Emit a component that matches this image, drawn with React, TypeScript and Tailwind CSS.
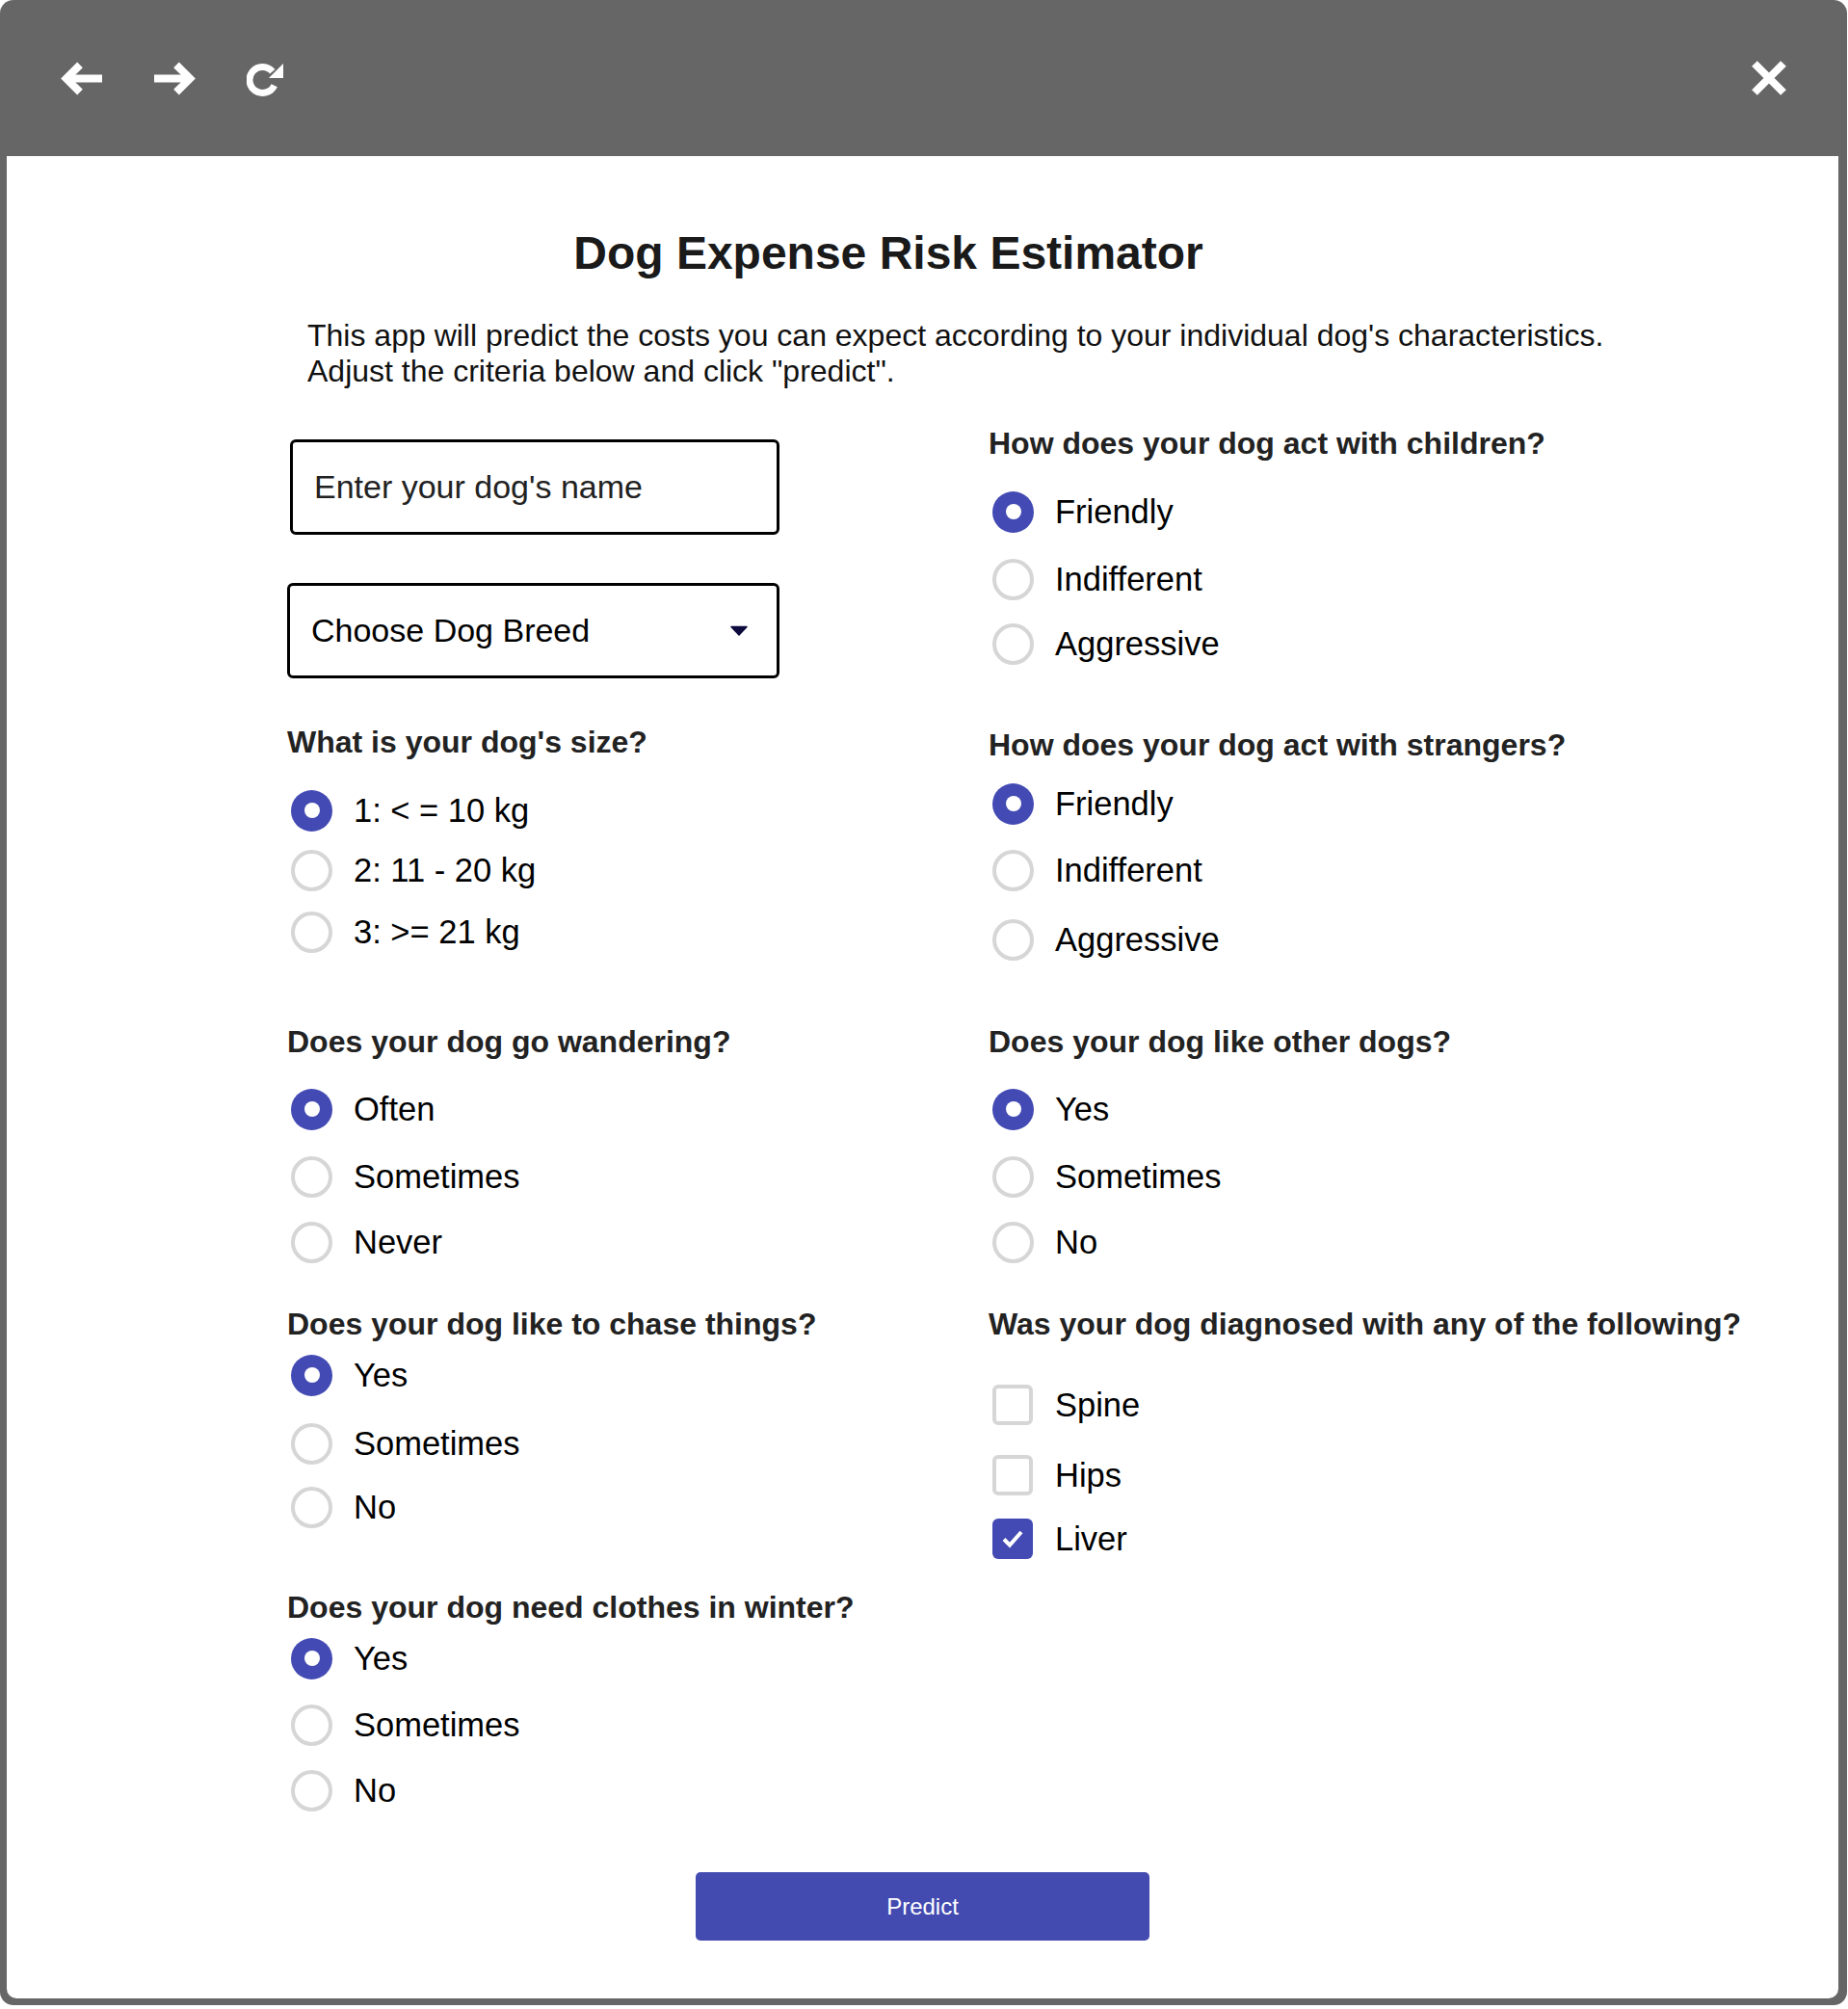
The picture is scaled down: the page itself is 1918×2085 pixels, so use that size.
import React from 'react';

const font = { fontFamily: '"Liberation Sans", Arial, Helvetica, sans-serif' };

const BackIcon = () => (
  <svg width="43" height="35" viewBox="0 0 43 35" fill="none" stroke="white" strokeWidth="8">
    <path d="M6 17.5H43" />
    <path d="M20 3.3L5.8 17.5L20 31.7" strokeLinejoin="miter" />
  </svg>
);

const ForwardIcon = () => (
  <svg width="43" height="35" viewBox="0 0 43 35" fill="none" stroke="white" strokeWidth="8">
    <path d="M0 17.5H37" />
    <path d="M23 3.3L37.2 17.5L23 31.7" strokeLinejoin="miter" />
  </svg>
);

const ReloadIcon = () => (
  <svg width="38" height="35" viewBox="0 0 38 35" fill="none">
    <path d="M26.8 8.3A13.5 13.5 0 1 0 28.7 22.7" stroke="white" strokeWidth="7" />
    <path d="M38 0V15H23Z" fill="white" />
  </svg>
);

const CloseIcon = () => (
  <svg width="36" height="36" viewBox="0 0 36 36" fill="none" stroke="white" strokeWidth="8">
    <path d="M3 3L33 33M33 3L3 33" />
  </svg>
);

const Radio = ({ checked }: { checked?: boolean }) =>
  checked ? (
    <span className="flex h-[43px] w-[43px] shrink-0 items-center justify-center rounded-full bg-[#434ab3]">
      <span className="h-[16px] w-[16px] rounded-full bg-white" />
    </span>
  ) : (
    <span className="h-[43px] w-[43px] shrink-0 rounded-full border-[4px] border-[#d6d6d6] bg-white" />
  );

const Check = ({ checked }: { checked?: boolean }) =>
  checked ? (
    <span className="flex h-[42px] w-[42px] shrink-0 items-center justify-center rounded-[6px] bg-[#434ab3]">
      <svg width="28" height="28" viewBox="0 0 28 28" fill="none" stroke="white" strokeWidth="4">
        <path d="M5 14.5L11 20.5L23 7" />
      </svg>
    </span>
  ) : (
    <span className="h-[42px] w-[42px] shrink-0 rounded-[6px] border-[4px] border-[#d6d6d6] bg-white" />
  );

const Heading = ({ children, className }: { children: React.ReactNode; className: string }) => (
  <h2 className={`h-[40px] text-[32px] leading-[40px] font-bold text-[#222] ${className}`}>{children}</h2>
);

const Option = ({
  label,
  checked,
  box,
  className,
}: {
  label: string;
  checked?: boolean;
  box?: boolean;
  className: string;
}) => (
  <label className={`ml-[4px] flex h-[50px] items-center ${box ? 'gap-[23px]' : 'gap-[22px]'} ${className}`}>
    {box ? <Check checked={checked} /> : <Radio checked={checked} />}
    <span className="text-[34.5px] leading-none text-black">{label}</span>
  </label>
);

export default function App() {
  return (
    <div className="h-[2085px] w-[1918px] bg-white" style={font}>
      <div className="flex h-[2081px] w-[1917px] flex-col overflow-hidden rounded-[14px] bg-[#666666]">
        <header className="flex h-[162px] shrink-0 items-center px-[63px]">
          <BackIcon />
          <span className="ml-[54px]">
            <ForwardIcon />
          </span>
          <span className="ml-[53px] mt-[4px]">
            <ReloadIcon />
          </span>
          <span className="ml-auto">
            <CloseIcon />
          </span>
        </header>

        <div className="flex flex-1 pb-[7px] pl-[7px] pr-[9px]">
          <main className="flex flex-1 flex-col rounded-b-[10px] bg-white">
            <h1 className="ml-[291px] mt-[73px] w-[1248px] text-center text-[48px] leading-[56px] font-bold text-[#1a1a1a]">
              Dog Expense Risk Estimator
            </h1>
            <p className="ml-[312px] mt-[39px] text-[32px] leading-[37px] text-[#111]">
              This app will predict the costs you can expect according to your individual dog's characteristics.
              <br />
              Adjust the criteria below and click "predict".
            </p>

            <div className="ml-[291px] grid grid-cols-[728px_1fr]">
              <section className="flex flex-col">
                <div className="ml-[3px] mt-[52px] flex h-[99px] w-[508px] items-center rounded-[6px] border-[3px] border-black pl-[22px] text-[34px] text-[#222]">
                  Enter your dog's name
                </div>
                <div className="mt-[50px] flex h-[99px] w-[511px] items-center justify-between rounded-[6px] border-[3px] border-black pl-[22px] pr-[30px] text-[34px] text-black">
                  Choose Dog Breed
                  <svg width="18" height="11" viewBox="0 0 18 11">
                    <path d="M1 1.5H17L9 10Z" fill="#0d0b3d" stroke="#0d0b3d" strokeWidth="1.5" strokeLinejoin="round" />
                  </svg>
                </div>

                <Heading className="mt-[46px]">What is your dog's size?</Heading>
                <Option className="mt-[26px]" label="1: < = 10 kg" checked />
                <Option className="mt-[12px]" label="2: 11 - 20 kg" />
                <Option className="mt-[14px]" label="3: >= 21 kg" />

                <Heading className="mt-[69px]">Does your dog go wandering?</Heading>
                <Option className="mt-[25px]" label="Often" checked />
                <Option className="mt-[20px]" label="Sometimes" />
                <Option className="mt-[18px]" label="Never" />

                <Heading className="mt-[40px]">Does your dog like to chase things?</Heading>
                <Option className="mt-[8px]" label="Yes" checked />
                <Option className="mt-[21px]" label="Sometimes" />
                <Option className="mt-[16px]" label="No" />

                <Heading className="mt-[59px]">Does your dog need clothes in winter?</Heading>
                <Option className="mt-[8px]" label="Yes" checked />
                <Option className="mt-[19px]" label="Sometimes" />
                <Option className="mt-[18px]" label="No" />
              </section>

              <section className="flex flex-col">
                <Heading className="mt-[36px]">How does your dog act with children?</Heading>
                <Option className="mt-[26px]" label="Friendly" checked />
                <Option className="mt-[20px]" label="Indifferent" />
                <Option className="mt-[17px]" label="Aggressive" />

                <Heading className="mt-[60px]">How does your dog act with strangers?</Heading>
                <Option className="mt-[16px]" label="Friendly" checked />
                <Option className="mt-[19px]" label="Indifferent" />
                <Option className="mt-[22px]" label="Aggressive" />

                <Heading className="mt-[61px]">Does your dog like other dogs?</Heading>
                <Option className="mt-[25px]" label="Yes" checked />
                <Option className="mt-[20px]" label="Sometimes" />
                <Option className="mt-[18px]" label="No" />

                <Heading className="mt-[40px]">Was your dog diagnosed with any of the following?</Heading>
                <Option className="mt-[39px]" label="Spine" box />
                <Option className="mt-[23px]" label="Hips" box />
                <Option className="mt-[16px]" label="Liver" box checked />
              </section>
            </div>

            <button className="mx-auto mt-[60px] h-[71px] w-[471px] rounded-[5px] bg-[#434bb1] text-[24px] text-white">
              Predict
            </button>
          </main>
        </div>
      </div>
    </div>
  );
}
